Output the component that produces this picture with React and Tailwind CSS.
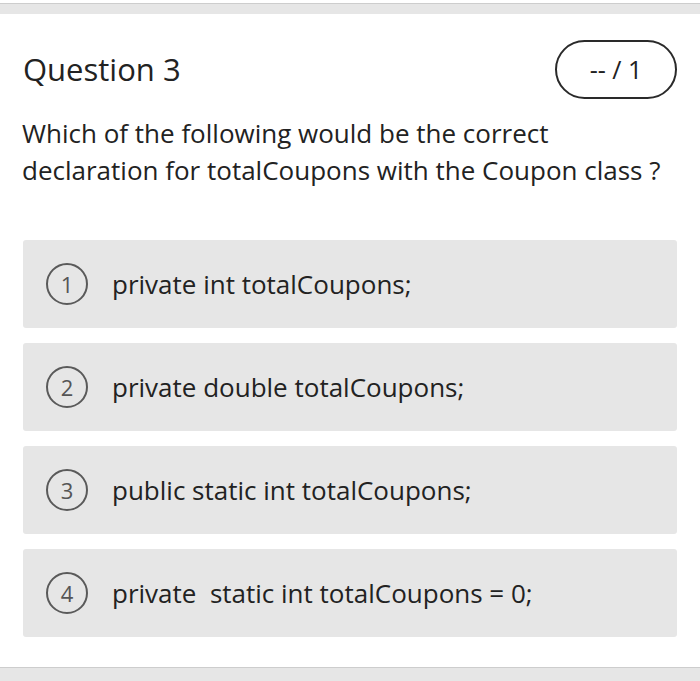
const options = [
  'private int totalCoupons;',
  'private double totalCoupons;',
  'public static int totalCoupons;',
  'private  static int totalCoupons = 0;',
];

export default function App() {
  return (
    <div className="flex h-[681px] w-[700px] flex-col bg-white font-['Open_Sans',sans-serif] text-[#222]">
      <div className="mt-[3px] h-[11px] border-t border-[#cdcdcd] bg-[#e6e6e6]" />
      <div className="flex flex-1 flex-col px-[23px]">
        <div className="mt-[26px] flex items-center justify-between">
          <h2 className="text-[31px] leading-none">Question 3</h2>
          <div className="flex h-[59px] w-[122px] items-center justify-center rounded-full border-2 border-[#2a2a2a] text-[25px]">
            -- / 1
          </div>
        </div>
        <p className="mt-[16px] text-[26px] leading-[37px] -ml-[1px]">
          Which of the following would be the correct
          <br />
          declaration for totalCoupons with the Coupon class ?
        </p>
        <div className="mt-[51px] flex flex-col gap-[15px]">
          {options.map((opt, i) => (
            <div
              key={i}
              className="flex h-[88px] items-center rounded-[3px] bg-[#e6e6e6] pl-[23px]"
            >
              <span className="flex h-[42px] w-[42px] items-center justify-center rounded-full border-2 border-[#5a5a5a] text-[22px] text-[#555]">
                {i + 1}
              </span>
              <span className="ml-[24px] whitespace-pre text-[26px]">{opt}</span>
            </div>
          ))}
        </div>
      </div>
      <div className="h-[14px] border-t border-[#cdcdcd] bg-[#e6e6e6]" />
    </div>
  );
}
